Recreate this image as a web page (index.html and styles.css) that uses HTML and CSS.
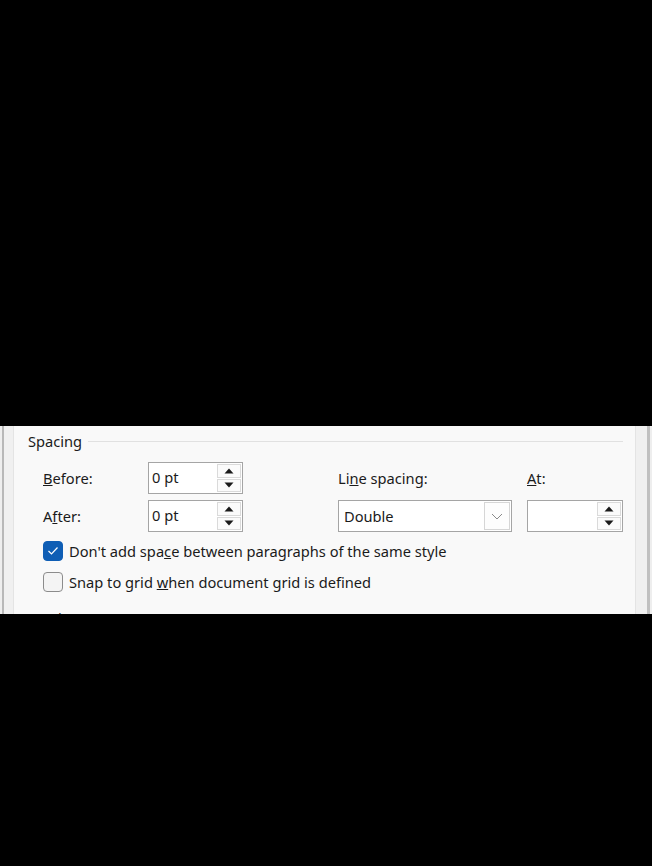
FILE: index.html
```html
<!DOCTYPE html>
<html lang="en">
<head>
<meta charset="utf-8">
<title>Paragraph</title>
<link rel="stylesheet" href="styles.css">
</head>
<body>
<div class="top"></div>
<div class="window">
  <div class="edge-left"></div>
  <div class="content">
    <div class="section-head"><span>Spacing</span></div>
    <div class="grid">
      <div class="label"><span><u>B</u>efore:</span></div>
      <div class="spin">
        <span class="value">0 pt</span>
        <div class="spin-btns">
          <div class="sbtn"><svg width="10" height="6" viewBox="0 0 10 6"><path d="M0.5 5.5 L5 0.5 L9.5 5.5 Z" fill="#1a1a1a"/></svg></div>
          <div class="sbtn"><svg width="10" height="6" viewBox="0 0 10 6"><path d="M0.5 0.5 L5 5.5 L9.5 0.5 Z" fill="#1a1a1a"/></svg></div>
        </div>
      </div>
      <div></div>
      <div class="label"><span>Li<u>n</u>e spacing:</span></div>
      <div></div>
      <div class="label"><span><u>A</u>t:</span></div>

      <div class="label"><span>A<u>f</u>ter:</span></div>
      <div class="spin">
        <span class="value">0 pt</span>
        <div class="spin-btns">
          <div class="sbtn"><svg width="10" height="6" viewBox="0 0 10 6"><path d="M0.5 5.5 L5 0.5 L9.5 5.5 Z" fill="#1a1a1a"/></svg></div>
          <div class="sbtn"><svg width="10" height="6" viewBox="0 0 10 6"><path d="M0.5 0.5 L5 5.5 L9.5 0.5 Z" fill="#1a1a1a"/></svg></div>
        </div>
      </div>
      <div></div>
      <div class="dropdown">
        <span class="value">Double</span>
        <div class="dd-btn"><svg width="12" height="7" viewBox="0 0 12 7"><path d="M1 1 L6 6 L11 1" fill="none" stroke="#8a8a8a" stroke-width="1"/></svg></div>
      </div>
      <div></div>
      <div class="spin">
        <span class="value"></span>
        <div class="spin-btns">
          <div class="sbtn"><svg width="10" height="6" viewBox="0 0 10 6"><path d="M0.5 5.5 L5 0.5 L9.5 5.5 Z" fill="#1a1a1a"/></svg></div>
          <div class="sbtn"><svg width="10" height="6" viewBox="0 0 10 6"><path d="M0.5 0.5 L5 5.5 L9.5 0.5 Z" fill="#1a1a1a"/></svg></div>
        </div>
      </div>
    </div>
    <div class="checks">
      <div class="check-row">
        <span class="box checked"><svg width="12" height="10" viewBox="0 0 12 10"><path d="M1.5 5 L4.5 8 L10.5 1.5" fill="none" stroke="#ffffff" stroke-width="1.2"/></svg></span>
        <span>Don't add spa<u>c</u>e between paragraphs of the same style</span>
      </div>
      <div class="check-row">
        <span class="box"></span>
        <span>Snap to grid <u>w</u>hen document grid is defined</span>
      </div>
    </div>
    <div class="section-head next"><span>Preview</span></div>
  </div>
  <div class="edge-right"></div>
</div>
</body>
</html>
```
FILE: styles.css
```css
html, body {
  margin: 0;
  padding: 0;
  background: #000000;
}
body {
  font-family: "Noto Sans", "Open Sans", sans-serif;
  font-size: 14.65px;
  color: #1b1b1b;
}
.top {
  height: 426px;
}
.window {
  height: 188px;
  display: flex;
  background: #f0f0f0;
}
.edge-left {
  width: 13px;
  border-right: 1px solid #e4e4e4;
  background: linear-gradient(to right, #eeeeee 0 2px, #b8b8b8 2px 4px, #f0f0f0 4px);
}
.edge-right {
  width: 16px;
  border-left: 1px solid #e4e4e4;
  background: linear-gradient(to right, #f0f0f0 0 11px, #c0c0c0 11px 14px, #eeeeee 14px);
}
.content {
  flex: 1;
  background: #f9f9f9;
  overflow: hidden;
  padding: 4px 12px 0 14px;
}
.section-head {
  display: flex;
  align-items: center;
  gap: 6px;
  height: 22px;
  line-height: 22px;
}
.section-head::after {
  content: "";
  flex: 1;
  height: 1px;
  background: #e1e1e1;
}
.grid {
  margin: 10px 0 0 15px;
  display: grid;
  grid-template-columns: 105px 95px 95px 174px 15px 96px;
  grid-template-rows: 32px 32px;
  row-gap: 6px;
}
.label {
  display: flex;
  align-items: center;
}
.spin, .dropdown {
  box-sizing: border-box;
  border: 1px solid #a5a5a5;
  background: #ffffff;
  display: flex;
  align-items: stretch;
}
.value {
  flex: 1;
  display: flex;
  align-items: center;
  padding-left: 3px;
  padding-bottom: 2px;
}
.dropdown .value {
  padding-left: 5px;
  padding-bottom: 0;
}
.spin-btns {
  width: 24px;
  margin: 1px 1px 1px 0;
  display: flex;
  flex-direction: column;
  gap: 1px;
}
.sbtn {
  flex: 1;
  box-sizing: border-box;
  border: 1px solid #dadada;
  background: #fbfbfb;
  display: flex;
  align-items: center;
  justify-content: center;
}
.dd-btn {
  width: 26px;
  margin: 1px;
  box-sizing: border-box;
  border: 1px solid #d6d6d6;
  background: #fdfdfd;
  display: flex;
  align-items: center;
  justify-content: center;
}
.checks {
  margin: 9px 0 0 15px;
  display: flex;
  flex-direction: column;
  gap: 11px;
}
.check-row {
  display: flex;
  align-items: center;
  gap: 6px;
  height: 20px;
}
.box {
  box-sizing: border-box;
  width: 20px;
  height: 20px;
  border: 1px solid #8c8c8c;
  border-radius: 4px;
  background: #f4f4f4;
  display: flex;
  align-items: center;
  justify-content: center;
}
.box.checked {
  border-color: #0f5eb5;
  background: #0f5eb5;
}
.next {
  margin-top: 15px;
}
```
